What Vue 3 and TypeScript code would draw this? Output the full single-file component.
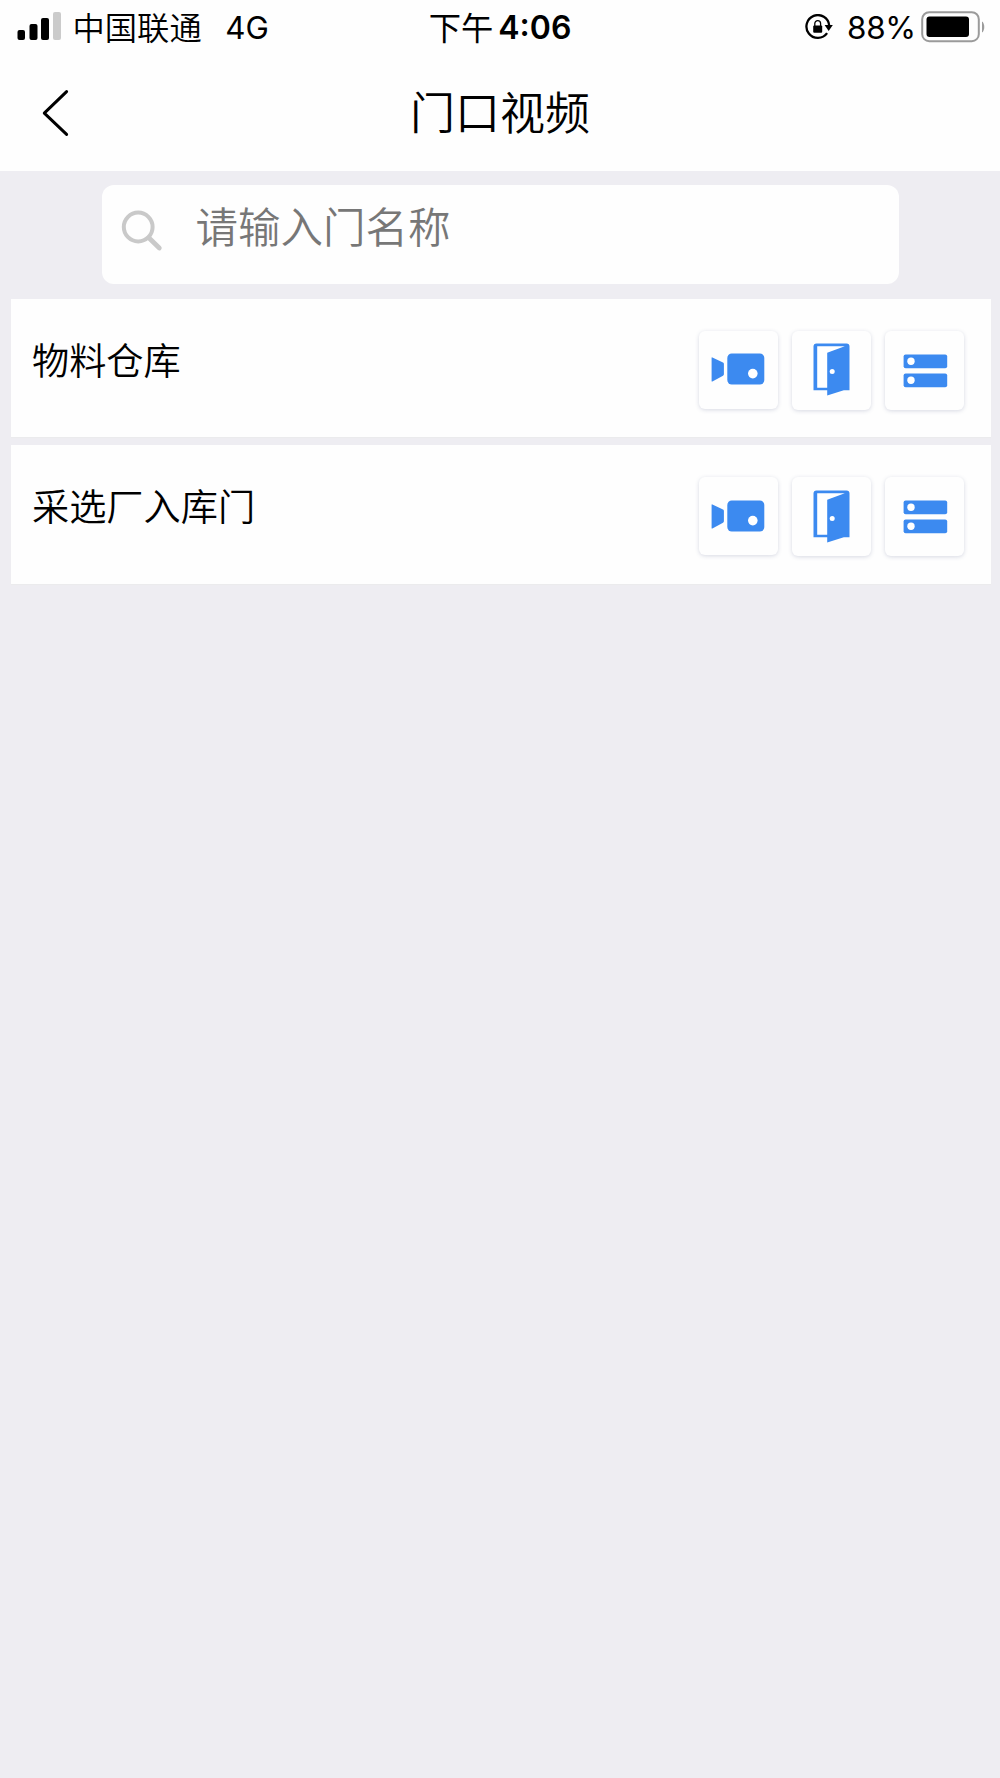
<script setup lang="ts">
import { ref, computed } from 'vue'

interface Door {
  id: number
  name: string
}

const keyword = ref('')
const doors: Door[] = [
  { id: 1, name: '物料仓库' },
  { id: 2, name: '采选厂入库门' },
]
const visibleDoors = computed(() => doors.filter((d) => d.name.includes(keyword.value.trim())))
</script>

<template>
  <div class="screen">
    <header class="top">
      <div class="status">
        <div class="status-left">
          <svg class="signal" width="44" height="28" viewBox="0 0 44 28">
            <rect x="0.5" y="18" width="7.5" height="10" rx="2" />
            <rect x="12.5" y="12" width="8" height="16" rx="2" />
            <rect x="24" y="6" width="8" height="22" rx="2" />
            <rect x="36" y="0" width="8" height="28" rx="2" fill="#cbcbcb" />
          </svg>
          <span class="carrier">中国联通</span>
          <span class="network">4G</span>
        </div>
        <div class="status-time"><span class="period">下午</span><span class="clock">4:06</span></div>
        <div class="status-right">
          <svg class="lock" width="28" height="26" viewBox="0 0 28 26">
            <path d="M22.1 19.2A11.4 11.4 0 1 1 24.2 11.5" fill="none" stroke="#000" stroke-width="2.3" />
            <path d="M19.6 11h8.2l-4.1 6z" />
            <rect x="8.2" y="11.5" width="9" height="7.2" rx="1" />
            <path d="M9.8 12V9.6a2.9 2.9 0 0 1 5.8 0V12" fill="none" stroke="#000" stroke-width="1.3" />
          </svg>
          <span class="percent">88%</span>
          <svg class="battery" width="64" height="32" viewBox="0 0 64 32">
            <rect x="1.2" y="1.2" width="56.6" height="29" rx="7" fill="none" stroke="#9b9b9b" stroke-width="2" />
            <rect x="5.5" y="5.5" width="42.5" height="20.5" rx="3" />
            <path d="M61 10.5c3 1.5 3 9.5 0 11z" fill="#9b9b9b" />
          </svg>
        </div>
      </div>
      <div class="navbar">
        <svg class="back" width="28" height="48" viewBox="0 0 28 48">
          <path d="M25.6 2.6L3.3 24.2L25.6 45.4" fill="none" stroke="#000" stroke-width="3" stroke-linecap="round" stroke-linejoin="round" />
        </svg>
        <h1 class="title">门口视频</h1>
      </div>
    </header>

    <label class="search">
      <svg class="search-icon" width="42" height="42" viewBox="0 0 42 42">
        <circle cx="17.2" cy="17" r="14.4" fill="none" stroke="#c9c9c9" stroke-width="4" />
        <path d="M27.8 27.8L38.3 38" stroke="#c9c9c9" stroke-width="4.8" stroke-linecap="round" />
      </svg>
      <input v-model="keyword" class="search-input" type="text" placeholder="请输入门名称" />
    </label>

    <main class="list">
      <section v-for="door in visibleDoors" :key="door.id" class="row">
        <span class="name">{{ door.name }}</span>
        <div class="actions">
          <button class="action video" type="button">
            <svg width="54" height="32" viewBox="0 0 54 32">
              <path d="M0.6 4.7Q0.6 4 1.4 4.4L12 9.6Q12.9 10.1 12.9 11V21.3Q12.9 22.2 12 22.7L1.4 28.4Q0.6 28.8 0.6 28.2z" />
              <rect x="16.3" y="0.4" width="37" height="31.2" rx="4.5" />
              <circle cx="41.8" cy="20.6" r="4.8" fill="#fff" />
            </svg>
          </button>
          <button class="action door" type="button">
            <svg width="37" height="53" viewBox="0 0 37 53">
              <path d="M3.5 0.5H33.5Q36.5 0.5 36.5 3.5V47.3H30.8L14.2 52.6V47.3H0.5V3.5Q0.5 0.5 3.5 0.5z" />
              <path d="M4.2 3.3H31.8L14.2 9.8V44.8H4.2z" fill="#fff" />
              <circle cx="19.2" cy="28.6" r="2.5" fill="#fff" />
            </svg>
          </button>
          <button class="action records" type="button">
            <svg width="45" height="34" viewBox="0 0 45 34">
              <rect x="0.6" y="0.5" width="43.6" height="13.8" rx="2" />
              <rect x="0.6" y="19.5" width="43.6" height="13.8" rx="2" />
              <circle cx="8" cy="7.3" r="3.7" fill="#fff" />
              <circle cx="8" cy="26.3" r="3.7" fill="#fff" />
            </svg>
          </button>
        </div>
      </section>
    </main>
  </div>
</template>

<style>
body {
  background: #eeedf2;
}
</style>

<style scoped>
.screen {
  box-sizing: border-box;
  min-height: 1778px;
  background: #eeedf2;
  color: #000;
  font-family: 'Noto Sans CJK SC', sans-serif;
  font-weight: 350;
}
svg {
  display: block;
  flex: none;
}
.top {
  height: 171px;
  background: #fefefe;
}
.status {
  display: grid;
  grid-template-columns: 1fr auto 1fr;
  height: 54px;
  font-size: 32.3px;
  line-height: 52px;
  white-space: nowrap;
}
.status-left,
.status-time,
.status-right {
  display: flex;
  align-items: flex-start;
}
.status-left {
  padding-left: 17px;
}
.signal {
  margin-top: 12px;
}
.carrier {
  margin-left: 11.5px;
}
.network,
.clock,
.percent {
  font-family: Inter, sans-serif;
  line-height: 56px;
}
.network {
  margin-left: 23.5px;
  font-size: 31.3px;
  font-weight: 400;
}
.period {
  font-weight: 400;
}
.clock {
  margin-left: 5px;
  font-size: 32px;
  font-weight: 600;
}
.status-right {
  justify-content: flex-end;
  padding-right: 15px;
}
.lock {
  margin-top: 14px;
}
.percent {
  margin-left: 14px;
  font-size: 31.4px;
  font-weight: 400;
  letter-spacing: -0.2px;
}
.battery {
  margin: 10.5px 0 0 5px;
}
.navbar {
  display: grid;
  grid-template-columns: 80px 1fr 80px;
  height: 117px;
}
.back {
  margin: 35px 0 0 41px;
}
.title {
  margin: 0;
  font-size: 45px;
  font-weight: 350;
  line-height: 114px;
  text-align: center;
}
.search {
  display: flex;
  box-sizing: border-box;
  width: 797px;
  height: 99px;
  margin: 14px auto 0;
  padding-left: 19px;
  border-radius: 12px;
  background: #fefefe;
}
.search-icon {
  margin-top: 25px;
}
.search-input {
  flex: 1;
  min-width: 0;
  height: 80px;
  margin: 0 20px 0 33px;
  padding: 0;
  border: 0;
  outline: 0;
  background: transparent;
  color: #333;
  font: 350 42.5px/80px 'Noto Sans CJK SC', sans-serif;
}
.search-input::placeholder {
  color: #777;
  opacity: 1;
}
.list {
  display: flex;
  flex-direction: column;
  gap: 8px;
  margin: 14.5px 9.5px 0 10.7px;
}
.row {
  display: flex;
  align-items: flex-start;
  justify-content: space-between;
  box-sizing: border-box;
  height: 138.5px;
  padding: 32px 26.5px 0 21.3px;
  background: #fefefe;
  box-shadow: 0 1px 1px #ebebed;
}
.name {
  font-size: 37.2px;
  line-height: 57px;
}
.actions {
  display: flex;
  gap: 14px;
}
.action {
  display: flex;
  box-sizing: border-box;
  align-items: center;
  justify-content: center;
  width: 79px;
  height: 79px;
  padding: 0;
  border: 0;
  border-radius: 6px;
  background: #fefefe;
  box-shadow: 0 1px 4px rgba(60, 70, 120, 0.2);
  fill: #3c8af0;
}
.video {
  height: 78px;
  padding: 0 1px 1px 0;
}
.door {
  padding: 0 1px 1px 0;
}
.records {
  padding: 1px 0 0 2px;
}
</style>
